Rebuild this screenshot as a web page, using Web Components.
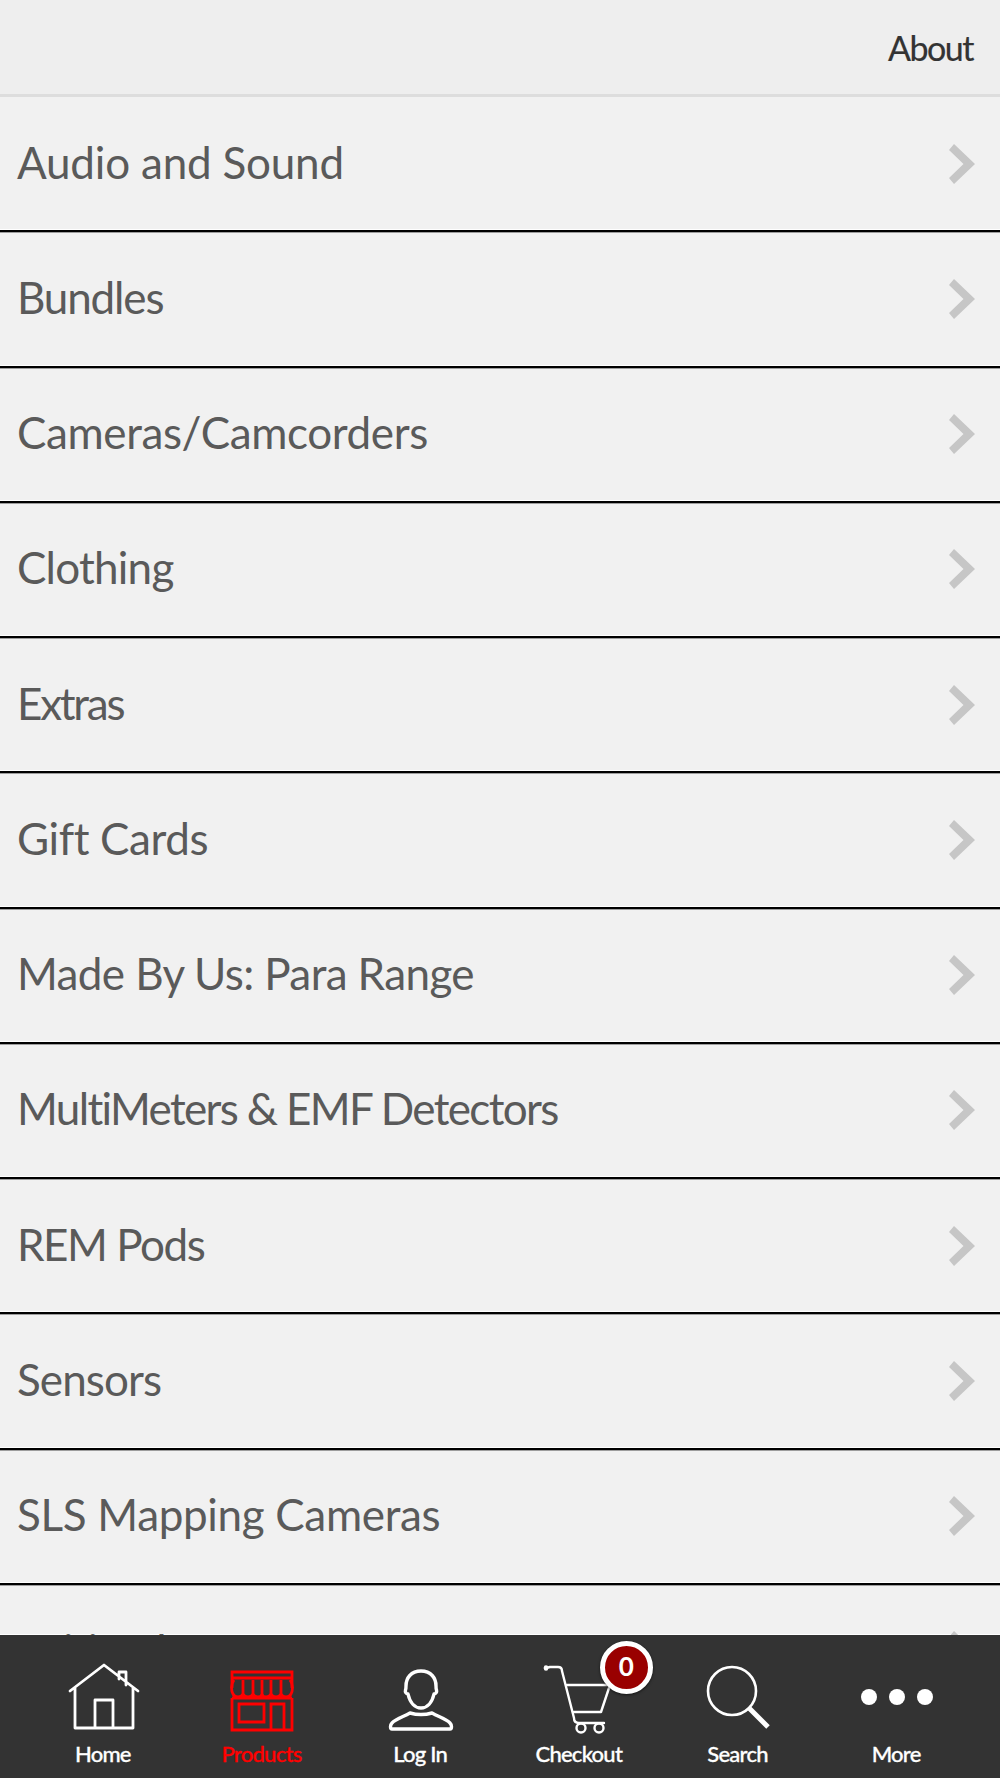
<!DOCTYPE html>
<html lang="en"><head><meta charset="utf-8"><title>Products</title>
<style>html,body{margin:0;padding:0;background:#f1f1f1}</style>
</head><body>
<app-shell>
  <top-bar slot="top">About</top-bar>
  <menu-row style="--ls:-.2px">Audio and Sound</menu-row>
  <menu-row style="--ls:-1.15px">Bundles</menu-row>
  <menu-row style="--ls:-.38px">Cameras/Camcorders</menu-row>
  <menu-row style="--ls:-.77px">Clothing</menu-row>
  <menu-row style="--ls:-2.25px">Extras</menu-row>
  <menu-row style="--ls:-.4px">Gift Cards</menu-row>
  <menu-row style="--ls:-.61px">Made By Us: Para Range</menu-row>
  <menu-row style="--ls:-1.66px">MultiMeters &amp; EMF Detectors</menu-row>
  <menu-row style="--ls:-1.45px">REM Pods</menu-row>
  <menu-row style="--ls:-.9px">Sensors</menu-row>
  <menu-row style="--ls:-.33px">SLS Mapping Cameras</menu-row>
  <menu-row style="--ls:-1px;--pb:2px">Spiritual</menu-row>
  <tab-bar slot="bottom">
    <tab-item label="Home"><svg viewBox="0 0 80 76" width="80" height="76" fill="none" stroke="#fff" stroke-width="2.8" stroke-linejoin="round" stroke-linecap="round"><path d="M7 31 41 5 75 31M12 28V68H70V28M32 68V40H50V68M56 19V12H63V25"/></svg></tab-item>
    <tab-item label="Products" active><svg viewBox="0 0 80 76" width="80" height="76" fill="none" stroke="#f00" stroke-width="2.8"><path d="M10 28V12H70V28M10 18H70M10 38V70H70V38M10 38H70"/><path d="M12 20C9 24 9 31 11 34 13 38 19 38 21 34 23 38 29 38 31 34 33 38 39 38 40 34 41 38 47 38 49 34 51 38 57 38 59 34 61 38 67 38 69 34 71 31 71 24 68 20M21 20V34M31 20V34M40 20V34M49 20V34M59 20V34"/><path d="M17 44H42V62H17ZM49 70V44H62V70"/></svg></tab-item>
    <tab-item label="Log In"><svg viewBox="0 0 80 76" width="80" height="76" fill="none" stroke="#fff" stroke-width="3.4" stroke-linejoin="round"><path d="M40 11C30 11 25 18 25 26 25 28 25 29 24.5 30 24 32 25 34 27 34 29 43 34 48 40 48 46 48 51 43 53 34 55 34 56 32 55.5 30 55 29 55 28 55 26 55 18 50 11 40 11Z"/><path d="M29 53C22 57 15 59 11 63 9 65 9 69 11 69H69C71 69 71 65 69 63 65 59 58 57 51 53 44 55 36 55 29 53Z"/></svg></tab-item>
    <tab-item label="Checkout"><svg viewBox="0 0 80 76" width="80" height="76" fill="none" stroke="#fff" stroke-width="2.4" stroke-linecap="round" stroke-linejoin="round"><path d="M7 8 11 7H19C21 7 23 8 23 11L35 58C35 61 37 63 40 63H65"/><path d="M7 7.5V8.5" stroke-width="4.5"/><path d="M28 25H71L62 52H35"/><circle cx="42" cy="68" r="4.5"/><circle cx="60" cy="68" r="4.5"/></svg><cart-badge slot="badge">0</cart-badge></tab-item>
    <tab-item label="Search"><svg viewBox="0 0 80 76" width="80" height="76" fill="none" stroke="#fff"><circle cx="34" cy="31" r="24" stroke-width="2.6"/><path d="M51 48 70 67" stroke-width="5"/></svg></tab-item>
    <tab-item label="More"><svg viewBox="0 0 80 76" width="80" height="76" fill="#fff"><circle cx="12" cy="37" r="8"/><circle cx="40" cy="37" r="8"/><circle cx="68" cy="37" r="8"/></svg></tab-item>
  </tab-bar>
</app-shell>
<script>
function def(name, css, html, init){
  customElements.define(name, class extends HTMLElement{
    constructor(){super();const r=this.attachShadow({mode:'open'});r.innerHTML='<style>'+css+'</style>'+html;}
    connectedCallback(){ if(init) init(this); }
  });
}
const FONT='"Lato","Noto Sans",sans-serif';
def('app-shell',
 `:host{display:flex;flex-direction:column;width:1000px;height:1778px;overflow:hidden;background:#f1f1f1;font-family:${FONT}}
  .list{flex:1;min-height:0;overflow:hidden;background:linear-gradient(#fff,#fff) bottom/100% 1px no-repeat #f1f1f1}`,
 `<slot name="top"></slot><div class="list"><slot></slot></div><slot name="bottom"></slot>`);
def('top-bar',
 `:host{display:flex;flex:none;box-sizing:border-box;height:97px;justify-content:flex-end;align-items:center;padding:0 27px 0 0;background:#eee;border-bottom:3px solid #ddd;color:#333;font-size:34px;letter-spacing:-1.5px;-webkit-text-stroke:.2px #333}`,
 `<slot></slot>`);
def('menu-row',
 `:host{display:flex;box-sizing:border-box;height:135.25px;align-items:center;justify-content:space-between;padding:0 25.5px 0 17px;border-bottom:2.25px solid #000;box-shadow:inset 0 -1px #fff,0 1px rgba(0,0,0,.35);color:#5a5a5a;font-size:44px;letter-spacing:var(--ls,0)}
  span{padding-bottom:var(--pb,4px)}
  svg{display:block;flex:none}`,
 `<span><slot></slot></span><svg viewBox="0 0 26 40" width="26" height="40"><path d="M5 0 26 20 5 40 0 34 14.5 20 0 6Z" fill="#c6c6c6"/></svg>`);
def('tab-bar',
 `:host{display:grid;flex:none;grid-template-columns:repeat(6,1fr);box-sizing:border-box;height:143px;padding:0 24px;background:#333}`,
 `<slot></slot>`);
def('tab-item',
 `:host{display:flex;flex-direction:column;align-items:center;position:relative;padding-top:25px;color:#fff;font-size:22px;font-weight:500;letter-spacing:-.75px}
  :host([active]){color:#f00}
  .icon{position:relative;width:80px;height:76px}
  ::slotted(svg){display:block}
  .label{line-height:28px;margin-top:4px;-webkit-text-stroke:.3px currentColor;padding-right:1px}`,
 `<div class="icon"><slot></slot><slot name="badge"></slot></div><div class="label"></div>`,
 el=>{el.shadowRoot.querySelector('.label').textContent=el.getAttribute('label');});
def('cart-badge',
 `:host{position:absolute;left:60.5px;top:-19.5px;display:flex;align-items:center;justify-content:center;box-sizing:border-box;width:53px;height:53px;padding:0 0 2px;border-radius:50%;background:#900;border:5px solid #fff;box-shadow:0 1px 3px rgba(0,0,0,.6);color:#fff;font-size:26px;font-weight:700;letter-spacing:0;-webkit-text-stroke:0}`,
 `<slot></slot>`);
</script>
</body></html>
